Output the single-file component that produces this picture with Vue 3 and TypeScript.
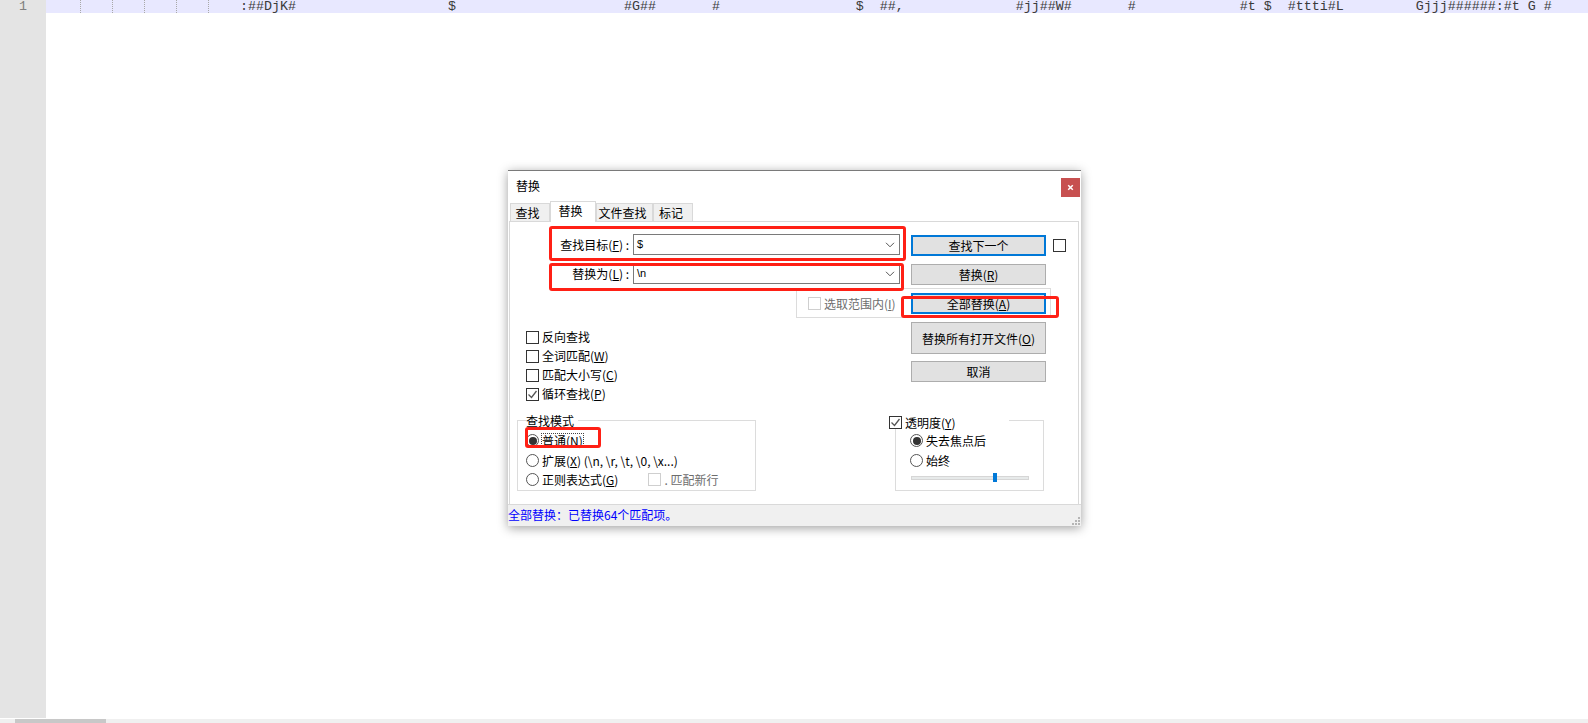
<script setup lang="ts">
const lineText =
  ':##DjK#                   $                     #G##       #                 $  ##,              #jj##W#       #             #t $  #ttti#L         Gjjj######:#t G #'
const guides: number[] = [0, 1, 2, 3, 4]
const tabs: string[] = ['查找', '替换', '文件查找', '标记']
</script>

<template>
  <div class="page">
    <div class="editor">
      <div class="gutter"><span class="num">1</span></div>
      <div class="code">
        <div class="line">
          <i v-for="g in guides" :key="g" class="guide"></i>
          <span class="line-text">{{ lineText }}</span>
        </div>
      </div>
    </div>
    <div class="hscroll"><div class="thumb"></div></div>

    <div class="dialog">
      <div class="titlebar">
        <span class="title">替换</span>
        <span class="close">
          <svg width="7" height="7" viewBox="0 0 7 7"><path d="M1.2 1.2l4.6 4.6M5.8 1.2L1.2 5.8" stroke="#fff" stroke-width="1.5" fill="none" /></svg>
        </span>
      </div>

      <div class="tabs">
        <span v-for="(t, i) in tabs" :key="t" class="tab" :class="{ active: i === 1, ['tab' + i]: true }">{{ t }}</span>
      </div>

      <div class="panel">
        <div class="range">
          <span class="box off"></span>
          <span class="off-text">选取范围内(<u>I</u>)</span>
        </div>

        <div class="top">
          <div class="form">
            <div class="field">
              <label class="field-label">查找目标(<u>F</u>) :</label>
              <div class="combo">
                <span>$</span>
                <svg width="10" height="6" viewBox="0 0 10 6"><path d="M1 .8l4 4 4-4" stroke="#555" fill="none" /></svg>
              </div>
            </div>
            <div class="field second">
              <label class="field-label">替换为(<u>L</u>) :</label>
              <div class="combo">
                <span>\n</span>
                <svg width="10" height="6" viewBox="0 0 10 6"><path d="M1 .8l4 4 4-4" stroke="#555" fill="none" /></svg>
              </div>
            </div>
            <div class="options">
              <div class="opt"><span class="box"></span><span>反向查找</span></div>
              <div class="opt"><span class="box"></span><span>全词匹配(<u>W</u>)</span></div>
              <div class="opt"><span class="box"></span><span>匹配大小写(<u>C</u>)</span></div>
              <div class="opt">
                <span class="box">
                  <svg width="11" height="11" viewBox="0 0 11 11"><path d="M1.5 5.5l3 3 5-6.5" stroke="#555" stroke-width="1.3" fill="none" /></svg>
                </span>
                <span>循环查找(<u>P</u>)</span>
              </div>
            </div>
          </div>

          <div class="actions">
            <div class="find-row">
              <button class="btn focus">查找下一个</button>
              <span class="box"></span>
            </div>
            <button class="btn">替换(<u>R</u>)</button>
            <button class="btn focus">全部替换(<u>A</u>)</button>
            <button class="btn tall">替换所有打开文件(<u>O</u>)</button>
            <button class="btn cancel">取消</button>
          </div>
        </div>

        <div class="bottom">
          <div class="group mode">
            <span class="legend">查找模式</span>
            <div class="opt radio-row">
              <span class="radio on"></span><span class="focused">普通(<u>N</u>)</span>
            </div>
            <div class="opt radio-row">
              <span class="radio"></span><span>扩展(<u>X</u>) (\n, \r, \t, \0, \x...)</span>
            </div>
            <div class="opt radio-row">
              <span class="radio"></span><span>正则表达式(<u>G</u>)</span>
              <span class="box off newline"></span><span class="off-text">. 匹配新行</span>
            </div>
          </div>

          <div class="group alpha">
            <div class="alpha-legend">
              <span class="box">
                <svg width="11" height="11" viewBox="0 0 11 11"><path d="M1.5 5.5l3 3 5-6.5" stroke="#555" stroke-width="1.3" fill="none" /></svg>
              </span>
              <span>透明度(<u>Y</u>)</span>
            </div>
            <div class="opt radio-row"><span class="radio on"></span>失去焦点后</div>
            <div class="opt radio-row"><span class="radio"></span>始终</div>
            <div class="slider"><i class="slider-thumb"></i></div>
          </div>
        </div>
      </div>

      <div class="status">
        <span>全部替换：已替换64个匹配项。</span>
        <svg class="grip" width="8" height="8" viewBox="0 0 8 8" fill="#b5b5b5">
          <rect x="6" y="0" width="2" height="2" />
          <rect x="3" y="3" width="2" height="2" />
          <rect x="6" y="3" width="2" height="2" />
          <rect x="0" y="6" width="2" height="2" />
          <rect x="3" y="6" width="2" height="2" />
          <rect x="6" y="6" width="2" height="2" />
        </svg>
      </div>
    </div>

    <i class="mark m1"></i>
    <i class="mark m2"></i>
    <i class="mark m3"></i>
    <i class="mark m4"></i>
  </div>
</template>

<style>
html,
body {
  margin: 0;
  background: #fff;
  overflow: hidden;
}
</style>

<style scoped>
.page {
  position: relative;
  width: 1588px;
  height: 723px;
  display: flex;
  flex-direction: column;
  overflow: hidden;
  background: #fff;
  font-family: "Noto Sans CJK SC", "Liberation Sans", sans-serif;
  font-size: 12px;
  color: #000;
}
.editor {
  flex: none;
  height: 718px;
  display: flex;
}
.gutter {
  flex: none;
  width: 46px;
  background: #e4e4e4;
}
.num {
  display: block;
  padding-left: 19px;
  font: 13.33px/13px "Liberation Mono", monospace;
  color: #808080;
}
.code {
  flex: 1;
  min-width: 0;
}
.line {
  position: relative;
  height: 13px;
  padding-left: 2px;
  background: #e8e8ff;
  overflow: hidden;
  white-space: pre;
}
.line-text {
  display: block;
  font: 13.33px/13px "Liberation Mono", monospace;
  color: #3a3a3a;
  margin-left: 192px;
}
.guide {
  position: absolute;
  top: 0;
  bottom: 0;
  border-left: 1px dotted #a8a8a8;
}
.guide:nth-child(1) { left: 34px; }
.guide:nth-child(2) { left: 66px; }
.guide:nth-child(3) { left: 98px; }
.guide:nth-child(4) { left: 130px; }
.guide:nth-child(5) { left: 162px; }
.hscroll {
  flex: none;
  height: 4px;
  margin-top: 1px;
  background: #f0f0f0;
  padding-left: 15px;
}
.thumb {
  width: 91px;
  height: 100%;
  background: #c8c8c8;
}

.dialog {
  position: absolute;
  left: 508px;
  top: 170px;
  width: 573px;
  height: 356px;
  box-sizing: border-box;
  border-top: 1px solid #7a7a7a;
  background: #fff;
  box-shadow: 0 2px 10px rgba(0, 0, 0, 0.38);
  display: flex;
  flex-direction: column;
}
.titlebar {
  flex: none;
  height: 30px;
  display: flex;
  align-items: center;
  justify-content: space-between;
}
.title {
  padding: 0 0 2px 8px;
}
.close {
  width: 19px;
  height: 19px;
  margin: 3px 1px 0 0;
  background: #c75050;
  display: flex;
  align-items: center;
  justify-content: center;
}
.tabs {
  flex: none;
  height: 21px;
  margin: 0 0 -1px 2px;
  display: flex;
  align-items: flex-end;
  position: relative;
  z-index: 2;
}
.tab {
  box-sizing: border-box;
  height: 18px;
  margin-bottom: 1px;
  padding-right: 5px;
  background: #f0f0f0;
  border: 1px solid #d9d9d9;
  border-bottom: 0;
  display: flex;
  align-items: center;
  justify-content: center;
}
.tab0 { width: 40px; }
.tab1 { width: 46px; }
.tab2 { width: 57px; padding-right: 4px; }
.tab3 { width: 40px; padding-right: 4px; }
.tab.active {
  height: 21px;
  margin-bottom: 0;
  background: #fff;
  padding-bottom: 3px;
}

.panel {
  position: relative;
  flex: none;
  width: 570px;
  height: 283px;
  margin-left: 1px;
  box-sizing: border-box;
  border: 1px solid #d9d9d9;
  border-bottom: 0;
}
.range {
  position: absolute;
  left: 286px;
  top: 66px;
  width: 255px;
  height: 30px;
  box-sizing: border-box;
  border: 1px solid #dcdcdc;
  padding-left: 11px;
  display: flex;
  align-items: center;
  gap: 3px;
}
.off-text {
  color: #6d6d6d;
}
.top {
  display: flex;
  height: 194px;
}
.form {
  flex: none;
  width: 401px;
  box-sizing: border-box;
  padding-top: 12px;
}
.field {
  display: flex;
  height: 21px;
  gap: 4px;
}
.field.second {
  margin-top: 8px;
}
.field-label {
  flex: none;
  width: 119px;
  text-align: right;
  line-height: 21px;
}
.combo {
  flex: none;
  width: 267px;
  box-sizing: border-box;
  border: 1px solid #7a7a7a;
  padding: 0 4px 0 3px;
  display: flex;
  align-items: center;
  justify-content: space-between;
  font-family: "Liberation Sans", sans-serif;
  font-size: 11px;
  line-height: 19px;
}
.options {
  margin: 47px 0 0 16px;
  display: flex;
  flex-direction: column;
  gap: 6px;
}
.options .opt > span:not(.box) {
  margin-bottom: 2px;
}
.opt {
  display: flex;
  align-items: center;
  height: 13px;
  gap: 3px;
  line-height: 13px;
  white-space: pre;
}
.box {
  flex: none;
  width: 13px;
  height: 13px;
  box-sizing: border-box;
  border: 1px solid #333;
  background: #fff;
  display: inline-flex;
  align-items: center;
  justify-content: center;
}
.box.off {
  border-color: #cfcfcf;
}
.actions {
  flex: none;
  padding-top: 13px;
  display: flex;
  flex-direction: column;
  align-items: flex-start;
  gap: 8px;
  position: relative;
  z-index: 1;
}
.find-row {
  display: flex;
  align-items: center;
  gap: 7px;
}
.btn {
  width: 135px;
  height: 21px;
  padding: 0;
  box-sizing: border-box;
  border: 1px solid #adadad;
  border-radius: 0;
  background: #e1e1e1;
  font: inherit;
  line-height: 17px;
  color: #000;
  text-align: center;
}
.btn.focus {
  border: 2px solid #0078d7;
}
.btn.tall {
  height: 32px;
}
.btn.cancel {
  margin-top: -1px;
}
.bottom {
  display: flex;
  padding-top: 4px;
}
.group {
  position: relative;
  height: 71px;
  box-sizing: border-box;
  border: 1px solid #dcdcdc;
  padding-top: 13px;
}
.mode {
  width: 239px;
  margin-left: 7px;
  padding-left: 8px;
}
.legend {
  position: absolute;
  left: 8px;
  top: -7px;
  padding-right: 4px;
  background: #fff;
  line-height: 13px;
}
.radio-row {
  height: 19.5px;
  align-items: flex-start;
  line-height: 13px;
}
.radio {
  flex: none;
  position: relative;
  width: 13px;
  height: 13px;
  box-sizing: border-box;
  border: 1.5px solid #555;
  border-radius: 50%;
  background: #fff;
}
.radio.on::after {
  content: "";
  position: absolute;
  inset: 1.5px;
  border-radius: 50%;
  background: #333;
}
.focused {
  outline: 1px dotted #444;
  outline-offset: 0;
}
.box.newline {
  margin-left: 27px;
}
.alpha {
  width: 149px;
  margin-left: 139px;
  padding-left: 14px;
}
.alpha-legend {
  position: absolute;
  left: -7px;
  top: -5px;
  width: 120px;
  height: 13px;
  display: flex;
  align-items: center;
  gap: 3px;
  background: #fff;
}
.slider {
  position: relative;
  width: 118px;
  height: 4px;
  margin: 3px 0 0 1px;
  box-sizing: border-box;
  border: 1px solid #d6d6d6;
  background: #e7eaea;
}
.slider-thumb {
  position: absolute;
  left: 81px;
  top: -4px;
  width: 4px;
  height: 9px;
  background: #0078d7;
}
.status {
  position: relative;
  flex: 1;
  box-sizing: border-box;
  border-top: 1px solid #d9d9d9;
  background: #f0f0f0;
  color: #0000ff;
  line-height: 20px;
}
.grip {
  position: absolute;
  right: 1px;
  bottom: 1px;
}
.mark {
  position: absolute;
  box-sizing: border-box;
  border: 3px solid #ff2015;
  border-radius: 3px;
  z-index: 5;
}
.m1 { left: 549px; top: 226px; width: 357px; height: 35px; }
.m2 { left: 549px; top: 263px; width: 355px; height: 28px; }
.m3 { left: 901px; top: 296px; width: 158px; height: 22px; }
.m4 { left: 525px; top: 427px; width: 76px; height: 21px; }
</style>
